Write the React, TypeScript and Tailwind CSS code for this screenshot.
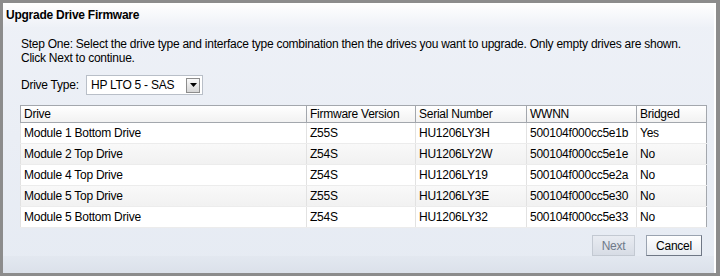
import React from 'react'

const font = { fontFamily: '"Liberation Sans", Arial, sans-serif' }

const rows = [
  { drive: 'Module 1 Bottom Drive', fw: 'Z55S', serial: 'HU1206LY3H', wwnn: '500104f000cc5e1b', bridged: 'Yes' },
  { drive: 'Module 2 Top Drive', fw: 'Z54S', serial: 'HU1206LY2W', wwnn: '500104f000cc5e1e', bridged: 'No' },
  { drive: 'Module 4 Top Drive', fw: 'Z54S', serial: 'HU1206LY19', wwnn: '500104f000cc5e2a', bridged: 'No' },
  { drive: 'Module 5 Top Drive', fw: 'Z55S', serial: 'HU1206LY3E', wwnn: '500104f000cc5e30', bridged: 'No' },
  { drive: 'Module 5 Bottom Drive', fw: 'Z54S', serial: 'HU1206LY32', wwnn: '500104f000cc5e33', bridged: 'No' }
]

const headers = ['Drive', 'Firmware Version', 'Serial Number', 'WWNN', 'Bridged']
const widths = ['w-[286px]', 'w-[109px]', 'w-[111px]', 'w-[110px]', 'w-[70px]']

export default function App() {
  return (
    <div className="w-[720px] h-[276px] bg-[#8c8c8c] pt-[3px] pb-[3px] pl-[3px] pr-[4px] text-[12px] tracking-[-0.25px] text-black" style={font}>
      <div className="h-full flex">
        <div className="flex-1 flex flex-col bg-gradient-to-b from-[#eef1f7] to-[#e6ebf3]">
          <div className="h-[24px] flex items-center pl-[3px] font-bold bg-gradient-to-b from-white to-[#eef1f7]">
            Upgrade Drive Firmware
          </div>

          <div className="pl-[17px] pr-[7px]">
            <p className="mt-[10px] pl-[1px] leading-[14px]">
              Step One: Select the drive type and interface type combination then the drives you want to upgrade. Only empty drives are shown. Click Next to continue.
            </p>

            <div className="mt-[10px] h-[20px] flex items-center pl-[1px]">
              <span className="w-[65px]">Drive Type:</span>
              <div className="w-[117px] h-[20px] bg-white border border-[#b9bfc8] flex items-center pl-[4px] pr-[2px]">
                <span className="flex-1">HP LTO 5 - SAS</span>
                <div className="w-[14px] h-[15px] border border-[#8d8d8d] bg-gradient-to-b from-[#fafafa] to-[#d6d6d6] flex items-center justify-center">
                  <svg width="7" height="4" viewBox="0 0 7 4">
                    <path d="M0 0 L7 0 L3.5 4 Z" fill="#000" />
                  </svg>
                </div>
              </div>
            </div>

            <table className="mt-[10px] w-[686px] border-collapse border border-[#a3a7ad] table-fixed">
              <thead>
                <tr className="h-[17px] bg-gradient-to-b from-white to-[#f1f1f1]">
                  {headers.map((h, i) => (
                    <th
                      key={h}
                      className={`${widths[i]} text-left font-normal px-[3px] leading-[16px] border-b border-[#a3a7ad] border-l border-l-[#a3a7ad]`}
                    >
                      {h}
                    </th>
                  ))}
                </tr>
              </thead>
              <tbody>
                {rows.map((r, idx) => (
                  <tr key={r.serial} className={`h-[21px] ${idx % 2 === 1 ? 'bg-gradient-to-b from-[#f9f9f9] to-[#f1f1f1]' : 'bg-white'}`}>
                    {[r.drive, r.fw, r.serial, r.wwnn, r.bridged].map((c, i) => (
                      <td key={i} className="px-[3px] leading-[20px] border-l border-[#e2e2e2] border-b border-b-[#ececec]">
                        {c}
                      </td>
                    ))}
                  </tr>
                ))}
              </tbody>
            </table>

            <div className="mt-[7px] w-[686px] flex justify-end gap-[11px] pr-[4px]">
              <button className="w-[43px] h-[21px] border border-[#c3c9d2] bg-gradient-to-b from-[#e9ecf2] to-[#d7dce5] text-[#6f7a89]">
                Next
              </button>
              <button className="w-[56px] h-[21px] border border-[#9aa3b0] border-b-[#6f7785] border-r-[#6f7785] bg-gradient-to-b from-white to-[#e7ebf1] text-black">
                Cancel
              </button>
            </div>
          </div>

          <div className="flex-1 bg-gradient-to-b from-[#e3e8f0] to-[#dbe1ea]" />
        </div>
        <div className="w-[3px] bg-white" />
      </div>
    </div>
  )
}
